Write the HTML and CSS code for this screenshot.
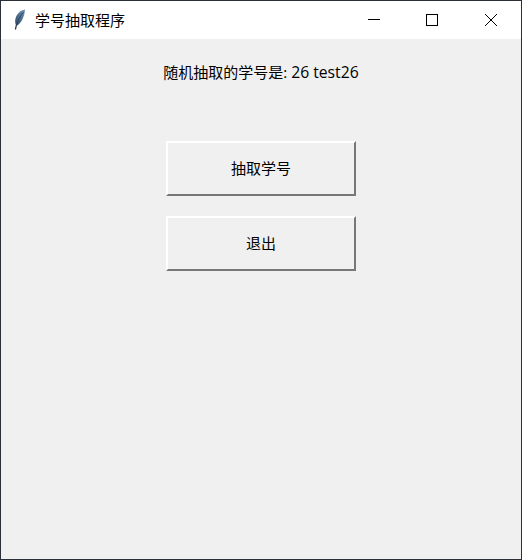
FILE: index.html
```html
<!DOCTYPE html>
<html lang="zh-CN">
<head>
<meta charset="utf-8">
<title>学号抽取程序</title>
<link rel="stylesheet" href="styles.css">
</head>
<body>
<div class="window">
  <header class="titlebar">
    <svg class="app-icon" width="16" height="22" viewBox="0 0 16 22">
      <defs>
        <linearGradient id="feather" x1="1" y1="0" x2="0" y2="1">
          <stop offset="0" stop-color="#6f93b5"/>
          <stop offset="1" stop-color="#2f4a66"/>
        </linearGradient>
      </defs>
      <path d="M13 .5 C8 1 3.6 6 3.2 11.5 C3.1 13.5 3.5 15.5 4.3 17 C9 14.5 12.6 8 13 .5Z" fill="url(#feather)"/>
      <path d="M11.5 3 C8.5 6.5 5.8 11.5 4.2 17" stroke="#1f3348" stroke-width=".7" fill="none"/>
      <path d="M4.3 16.5 L3.4 20.5" stroke="#333" stroke-width="1.2" fill="none"/>
    </svg>
    <span class="app-title">学号抽取程序</span>
    <div class="controls">
      <button class="control" aria-label="最小化">
        <svg width="12" height="12" viewBox="0 0 12 12"><path d="M0 5.5H12" stroke="#000" fill="none"/></svg>
      </button>
      <button class="control" aria-label="最大化">
        <svg width="12" height="12" viewBox="0 0 12 12"><rect x=".5" y=".5" width="11" height="11" stroke="#000" fill="none"/></svg>
      </button>
      <button class="control control-close" aria-label="关闭">
        <svg width="12" height="12" viewBox="0 0 12 12"><path d="M0 0L12 12M12 0L0 12" stroke="#000" fill="none"/></svg>
      </button>
    </div>
  </header>
  <main class="content">
    <p class="result">随机抽取的学号是: <span class="latin">26 test26</span></p>
    <button class="tk-button">抽取学号</button>
    <button class="tk-button">退出</button>
  </main>
</div>
</body>
</html>
```
FILE: styles.css
```css
html, body {
  margin: 0;
  padding: 0;
  height: 100%;
}
body {
  background: #2b2f36;
  font-family: "Open Sans", "Noto Sans CJK SC", sans-serif;
  color: #000;
}
.window {
  box-sizing: border-box;
  width: 522px;
  height: 560px;
  padding: 1px;
  display: flex;
  flex-direction: column;
}
.titlebar {
  height: 38px;
  flex: none;
  background: #fff;
  display: flex;
  align-items: center;
  padding-left: 11px;
}
.app-icon {
  flex: none;
}
.app-title {
  margin-left: 7px;
  font-size: 15px;
  font-family: "Noto Sans CJK SC", sans-serif;
  line-height: 20px;
}
.controls {
  margin-left: auto;
  display: flex;
  height: 100%;
}
.control {
  width: 58px;
  border: 0;
  padding: 0;
  background: none;
  display: flex;
  align-items: center;
  justify-content: center;
}
.control-close {
  width: 60px;
}
.content {
  flex: 1;
  background: #f0f0f0;
  display: flex;
  flex-direction: column;
  align-items: center;
}
.result {
  margin: 23px 0 59px;
  font-size: 15px;
  line-height: 20px;
  height: 20px;
  white-space: nowrap;
}
.latin {
  font-size: 15.7px;
}
.tk-button {
  box-sizing: border-box;
  width: 190px;
  height: 55px;
  margin-bottom: 20px;
  padding: 0 0 3px;
  font: inherit;
  font-size: 15px;
  font-family: "Noto Sans CJK SC", sans-serif;
  color: #000;
  background: #f0f0f0;
  border: 0;
  border-top: 2px solid #fff;
  border-left: 2px solid #fff;
  border-right: 2px solid #777;
  border-bottom: 2px solid #777;
}
```
